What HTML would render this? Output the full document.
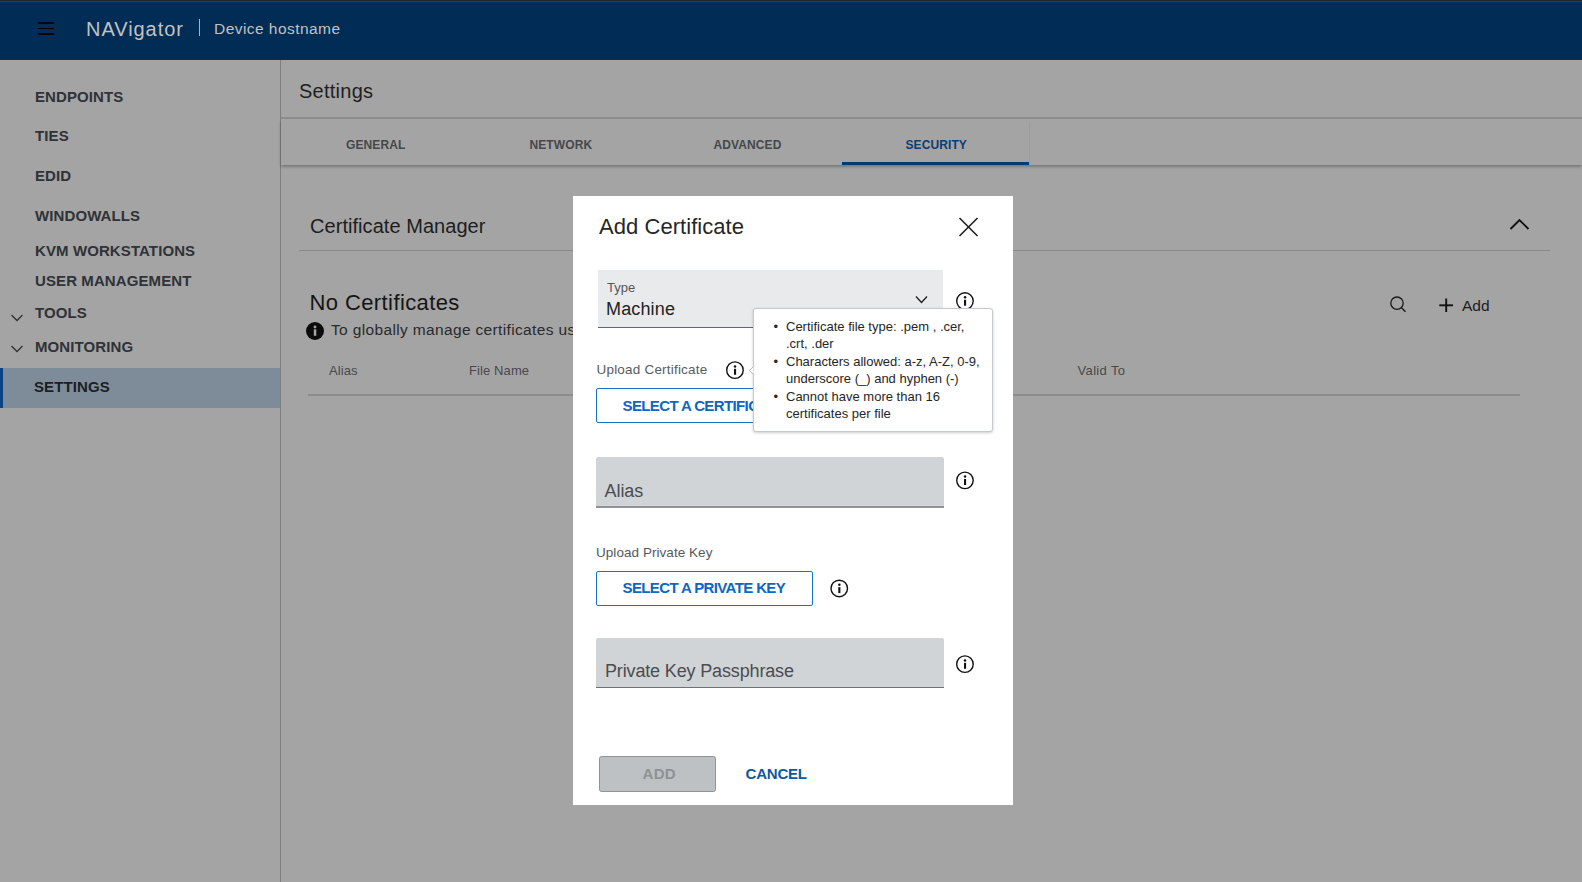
<!DOCTYPE html>
<html><head><meta charset="utf-8">
<style>
*{box-sizing:border-box;margin:0;padding:0}
html,body{width:1582px;height:882px;overflow:hidden;background:#a4a4a4;font-family:"Liberation Sans",sans-serif}
body{position:relative}
.a{position:absolute;white-space:nowrap}
.t{line-height:1}
.nav{left:35px;font-size:15px;font-weight:bold;color:#2f3236;letter-spacing:0.1px}
.tab{font-size:12px;font-weight:bold;color:#45484b;top:139px;letter-spacing:0.1px}
.th{font-size:13px;color:#48494b;top:363.5px;letter-spacing:0.1px}
svg{position:absolute;overflow:visible}
</style></head>
<body>
<!-- top strip -->
<div class="a" style="left:0;top:0;width:1582px;height:1px;background:#242424"></div>
<div class="a" style="left:0;top:1px;width:1582px;height:1px;background:#3d3b39"></div>
<!-- header -->
<div class="a" style="left:0;top:2px;width:1582px;height:58px;background:#002c55">
</div>
<div class="a" style="left:38.1px;top:22.2px;width:15.6px;height:1.8px;background:#02080e"></div>
<div class="a" style="left:38.1px;top:27.9px;width:15.6px;height:1.3px;background:#000"></div>
<div class="a" style="left:38.1px;top:33.2px;width:15.6px;height:1.8px;background:#02080e"></div>
<div class="a t" style="left:86px;top:19px;font-size:20px;color:#c2c2c2;letter-spacing:0.95px">NAVigator</div>
<div class="a" style="left:199.2px;top:19.2px;width:1.2px;height:17.3px;background:#b0b0b0"></div>
<div class="a t" style="left:214px;top:20.5px;font-size:15.5px;color:#c2c2c2;letter-spacing:0.45px">Device hostname</div>

<!-- sidebar -->
<div class="a nav t" style="top:89px">ENDPOINTS</div>
<div class="a nav t" style="top:128px">TIES</div>
<div class="a nav t" style="top:168px">EDID</div>
<div class="a nav t" style="top:208px">WINDOWALLS</div>
<div class="a nav t" style="top:243px">KVM WORKSTATIONS</div>
<div class="a nav t" style="top:273px">USER MANAGEMENT</div>
<div class="a nav t" style="top:304.5px">TOOLS</div>
<div class="a nav t" style="top:339px">MONITORING</div>
<svg style="left:0;top:0" width="30" height="400">
  <polyline points="11.5,315 17,320.5 22.5,315" fill="none" stroke="#2f3236" stroke-width="1.3"/>
  <polyline points="11.5,346 17,351.5 22.5,346" fill="none" stroke="#2f3236" stroke-width="1.3"/>
</svg>
<div class="a" style="left:0;top:368px;width:280px;height:40px;background:#7e8c9a"></div>
<div class="a" style="left:0;top:368px;width:3px;height:40px;background:#0a4383"></div>
<div class="a nav t" style="left:34px;top:379px;color:#1c1e21">SETTINGS</div>
<div class="a" style="left:280px;top:60px;width:1px;height:822px;background:#7f7f7f"></div>

<!-- main -->
<div class="a t" style="left:299px;top:81px;font-size:20px;color:#1f1f1f;letter-spacing:0.25px">Settings</div>
<div class="a" style="left:281px;top:117px;width:1301px;height:2px;background:#8c8c8c;box-shadow:0 0 0.6px #8c8c8c"></div>
<div class="a" style="left:281px;top:119px;width:1301px;height:46px;background:#a4a4a4;box-shadow:0 1.5px 3px rgba(0,0,0,0.32)"></div>
<div class="a tab t" style="left:346px">GENERAL</div>
<div class="a tab t" style="left:529.5px">NETWORK</div>
<div class="a tab t" style="left:713.5px">ADVANCED</div>
<div class="a tab t" style="left:905.5px;color:#0c3d74">SECURITY</div>
<div class="a" style="left:842px;top:162px;width:187px;height:3px;background:#063a73"></div>
<div class="a" style="left:1029px;top:122px;width:1px;height:43px;background:#9c9c9c"></div>

<div class="a t" style="left:310px;top:216px;font-size:20px;color:#1d1d1d;letter-spacing:0.05px">Certificate Manager</div>
<svg style="left:0;top:0" width="1582" height="882">
  <polyline points="1510.5,229 1519.5,220 1528.5,229" fill="none" stroke="#111" stroke-width="1.9"/>
  <circle cx="1397" cy="303.2" r="6.2" fill="none" stroke="#1a1a1a" stroke-width="1.3"/>
  <line x1="1401.5" y1="307.7" x2="1405.5" y2="311.7" stroke="#1a1a1a" stroke-width="1.4"/>
  <line x1="1439.3" y1="305.3" x2="1453" y2="305.3" stroke="#111" stroke-width="1.9"/>
  <line x1="1446.2" y1="298.5" x2="1446.2" y2="312" stroke="#111" stroke-width="1.9"/>
</svg>
<div class="a" style="left:299px;top:250px;width:1251px;height:1px;background:#878a88"></div>
<div class="a t" style="left:1462px;top:297.7px;font-size:15.5px;color:#1d1d1d">Add</div>

<div class="a t" style="left:309.5px;top:292px;font-size:22px;color:#151515;letter-spacing:0.4px">No Certificates</div>
<svg style="left:306px;top:321.5px" width="18" height="18">
  <circle cx="9" cy="9" r="9" fill="#0b0b0b"/>
  <rect x="7.8" y="7.3" width="2.5" height="6.5" fill="#a4a4a4"/>
  <circle cx="9" cy="5" r="1.4" fill="#a4a4a4"/>
</svg>
<div class="a t" style="left:331px;top:322px;font-size:15.5px;color:#2a2a2a;letter-spacing:0.35px">To globally manage certificates using the certificate manager</div>
<div class="a th t" style="left:329px">Alias</div>
<div class="a th t" style="left:469px">File Name</div>
<div class="a th t" style="left:1077.5px;letter-spacing:0.35px">Valid To</div>
<div class="a" style="left:308px;top:394px;width:1212px;height:2px;background:#8c8c8c"></div>

<!-- dialog -->
<div id="dlg" class="a" style="left:573px;top:196px;width:440px;height:609px;background:#fff"></div>
<div class="a t" style="left:599px;top:216px;font-size:22px;color:#262626;letter-spacing:0.05px">Add Certificate</div>
<svg style="left:0;top:0" width="1582" height="882">
  <line x1="959.5" y1="218" x2="977.5" y2="236" stroke="#1e1e1e" stroke-width="1.6"/>
  <line x1="977.5" y1="218" x2="959.5" y2="236" stroke="#1e1e1e" stroke-width="1.6"/>
</svg>
<!-- Type select -->
<div class="a" style="left:598px;top:270px;width:345px;height:58px;background:#e9eaec;border-bottom:1.5px solid #62666b"></div>
<div class="a t" style="left:607px;top:280.5px;font-size:13px;color:#54575a;letter-spacing:0.05px">Type</div>
<div class="a t" style="left:606px;top:300px;font-size:18px;color:#212325;letter-spacing:0.15px">Machine</div>
<svg style="left:0;top:0" width="1582" height="882">
  <polyline points="916,296.5 921.5,302.5 927,296.5" fill="none" stroke="#1d1d1d" stroke-width="1.3"/>
</svg>
<!-- Upload certificate -->
<div class="a t" style="left:596.5px;top:363px;font-size:13.5px;color:#585b5e;letter-spacing:0.2px">Upload Certificate</div>
<div class="a" style="left:596px;top:388px;width:230px;height:35px;border:1.3px solid #1872cc;border-radius:2px"></div>
<div class="a t" style="left:622.5px;top:398px;font-size:15px;font-weight:bold;color:#0c66c2;letter-spacing:-0.62px">SELECT A CERTIFICATE</div>
<!-- Alias -->
<div class="a" style="left:596px;top:457px;width:347.5px;height:51px;background:#d1d4d7;border-radius:2px 2px 0 0;border-bottom:2px solid #8f9397"></div>
<div class="a t" style="left:604.5px;top:482px;font-size:18px;color:#4a4d50;letter-spacing:-0.05px">Alias</div>
<!-- Upload Private key -->
<div class="a t" style="left:596px;top:545.5px;font-size:13.5px;color:#55585b;letter-spacing:0.05px">Upload Private Key</div>
<div class="a" style="left:596px;top:571px;width:216.5px;height:35px;border:1.3px solid #1872cc;border-radius:2px"></div>
<div class="a t" style="left:622.5px;top:580px;font-size:15px;font-weight:bold;color:#0c66c2;letter-spacing:-0.62px">SELECT A PRIVATE KEY</div>
<!-- Passphrase -->
<div class="a" style="left:596px;top:637.5px;width:347.5px;height:50.5px;background:#d1d4d7;border-radius:2px 2px 0 0;border-bottom:1.5px solid #6e7276"></div>
<div class="a t" style="left:605px;top:662px;font-size:18px;color:#4a4d50;letter-spacing:-0.15px">Private Key Passphrase</div>
<!-- footer -->
<div class="a" style="left:599px;top:756px;width:117px;height:35.5px;background:#bdc1c4;border:1px solid #8f9397;border-radius:2.5px"></div>
<div class="a t" style="left:642.5px;top:766px;font-size:15px;font-weight:bold;color:#8e9295;letter-spacing:0.3px">ADD</div>
<div class="a t" style="left:745.5px;top:766px;font-size:15px;font-weight:bold;color:#0b58a3;letter-spacing:-0.2px">CANCEL</div>
<!-- info icons -->
<svg style="left:0;top:0" width="1582" height="882" id="infos">
  <defs>
    <g id="ii">
      <circle cx="8.95" cy="8.95" r="8.25" fill="none" stroke="#111" stroke-width="1.4"/>
      <rect x="8" y="7.6" width="2.1" height="6" fill="#111"/>
      <circle cx="9.05" cy="5.2" r="1.25" fill="#111"/>
    </g>
  </defs>
  <use href="#ii" x="956" y="292.1"/>
  <use href="#ii" x="726" y="361.2"/>
  <use href="#ii" x="956" y="471.4"/>
  <use href="#ii" x="830.3" y="579.5"/>
  <use href="#ii" x="956" y="655.2"/>
</svg>
<!-- tooltip -->
<div class="a" style="left:753px;top:308px;width:240px;height:123.5px;background:#fff;border:1px solid #c6c9cc;border-radius:3px;box-shadow:0 1px 3px rgba(0,0,0,0.2)"></div>
<svg style="left:0;top:0" width="1582" height="882">
  <polygon points="753.8,366.3 749.2,370.5 753.8,374.7" fill="#fff" stroke="#b4b8bc" stroke-width="1"/>
  <rect x="753.6" y="366.6" width="2" height="7.8" fill="#fff"/>
</svg>
<div class="a" style="left:773.5px;top:317.5px;font-size:13px;line-height:17.5px;color:#262626;white-space:normal;width:215px">
  <div style="position:relative;padding-left:12.5px"><span style="position:absolute;left:0;top:0">•</span>Certificate file type: .pem , .cer,<br>.crt, .der</div>
  <div style="position:relative;padding-left:12.5px"><span style="position:absolute;left:0;top:0">•</span>Characters allowed: a-z, A-Z, 0-9,<br>underscore (_) and hyphen (-)</div>
  <div style="position:relative;padding-left:12.5px"><span style="position:absolute;left:0;top:0">•</span>Cannot have more than 16<br>certificates per file</div>
</div>
</body></html>
